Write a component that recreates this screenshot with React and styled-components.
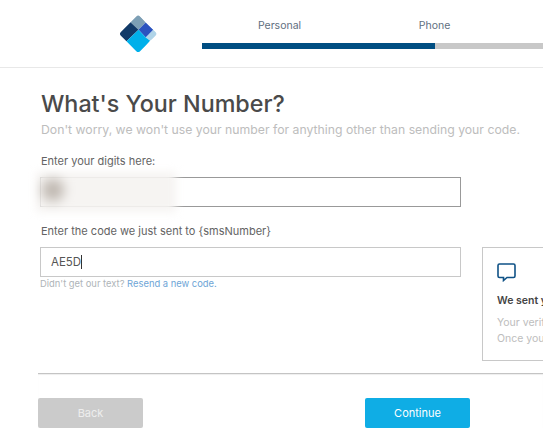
import React from "react";
import styled, { createGlobalStyle } from "styled-components";

const GlobalStyle = createGlobalStyle`
  html, body {
    margin: 0;
    padding: 0;
    background: #fff;
    overflow: hidden;
  }
  * {
    box-sizing: border-box;
  }
`;

const Logo = () => (
  <LogoSvg viewBox="50 40 130 125">
    <defs>
      <clipPath id="logoClip">
        <rect x="73" y="61" width="82" height="82" rx="8" transform="rotate(45 114 102)" />
      </clipPath>
    </defs>
    <g clipPath="url(#logoClip)">
      <polygon points="113,40 137,68 115,90 90,66" fill="#7d9fb5" />
      <polygon points="137,68 160,90 137,113 115,90" fill="#2b53bf" />
      <polygon points="160,90 180,103 150,123 137,113" fill="#b0d4e8" />
      <polygon points="90,66 115,90 78,125 50,100" fill="#123a68" />
      <polygon points="115,90 137,113 150,123 115,165 78,125" fill="#00b0ea" />
    </g>
  </LogoSvg>
);

const ChatIcon = () => (
  <ChatSvg viewBox="0 0 19 19" fill="none">
    <path
      d="M2.5 1h14a1.5 1.5 0 0 1 1.5 1.5v10.500a1.500 1.500 0 0 1-1.500 1.500H10l-3.500 3v-3h-4A1.500 1.500 0 0 1 1 13V2.500A1.500 1.500 0 0 1 2.500 1z"
      stroke="#0f5286"
      strokeWidth="1.6"
    />
  </ChatSvg>
);

export default function App() {
  return (
    <Page>
      <GlobalStyle />
      <Header>
        <Logo />
        <Steps>
          <Step>Personal</Step>
          <Step>Phone</Step>
          <Track>
            <TrackFill />
          </Track>
        </Steps>
      </Header>

      <Main>
        <Title>What's Your Number?</Title>
        <Subtitle>Don't worry, we won't use your number for anything other than sending your code.</Subtitle>

        <FormRow>
          <Form>
            <Field>
              <Label>Enter your digits here:</Label>
              <InputWrap>
                <Input $dark defaultValue="" />
                <Blur />
              </InputWrap>
            </Field>
            <Field>
              <Label>Enter the code we just sent to {"{smsNumber}"}</Label>
              <Input as="div">
                AE5D
                <Caret />
              </Input>
              <Help>
                Didn't get our text? <HelpLink>Resend a new code.</HelpLink>
              </Help>
            </Field>
          </Form>

          <Aside>
            <ChatIcon />
            <AsideTitle>We sent you a code</AsideTitle>
            <AsideText>Your verification code is on its way.</AsideText>
            <AsideText>Once you get it, enter it here.</AsideText>
          </Aside>
        </FormRow>
      </Main>

      <Footer>
        <Button>Back</Button>
        <Button $primary>Continue</Button>
      </Footer>
    </Page>
  );
}

const Page = styled.div`
  width: 543px;
  height: 445px;
  overflow: hidden;
  font-family: "Inter", "Liberation Sans", sans-serif;
  color: #4a4a4a;
`;

const Header = styled.header`
  display: flex;
  height: 68px;
  padding-left: 117px;
  border-bottom: 1px solid #e8e8e8;
`;

const LogoSvg = styled.svg`
  width: 43px;
  height: 42px;
  margin-top: 13px;
  margin-right: 42px;
  flex: none;
`;

const Steps = styled.div`
  display: grid;
  grid-template-columns: 155px 155px;
  grid-template-rows: 43px 6px;
  flex: none;
  width: 400px;
`;

const Step = styled.div`
  display: flex;
  justify-content: center;
  padding-top: 19px;
  font-size: 10.5px;
  line-height: 13px;
  color: #5f6f80;
`;

const Track = styled.div`
  grid-column: 1 / -1;
  width: 400px;
  height: 6px;
  background: #c8c8c8;
`;

const TrackFill = styled.div`
  width: 233px;
  height: 6px;
  background: #004e82;
`;

const Main = styled.main`
  height: 305px;
  padding: 22px 0 0 40px;
`;

const Title = styled.h1`
  margin: 0;
  padding-left: 1px;
  font-size: 23.3px;
  line-height: 28px;
  font-weight: 500;
  color: #4a4a4a;
  white-space: nowrap;
`;

const Subtitle = styled.p`
  margin: 5px 0 0;
  padding-left: 1px;
  font-size: 12.25px;
  line-height: 14px;
  color: #bdbdbd;
  white-space: nowrap;
`;

const FormRow = styled.div`
  display: flex;
  align-items: flex-start;
  gap: 21px;
  margin-top: 17px;
`;

const Form = styled.div`
  display: flex;
  flex-direction: column;
  gap: 17px;
  width: 421px;
  flex: none;
`;

const Field = styled.div`
  display: flex;
  flex-direction: column;
`;

const Label = styled.label`
  height: 23px;
  padding-left: 1px;
  font-size: 11px;
  line-height: 14px;
  color: #636363;
  white-space: nowrap;
`;

const InputWrap = styled.div`
  position: relative;
`;

const Input = styled.input`
  display: block;
  width: 100%;
  height: 30px;
  padding: 0 10px;
  border: 1px solid ${(p) => (p.$dark ? "#999" : "#c8c8c8")};
  border-radius: 0;
  outline: none;
  background: #fff;
  font-family: inherit;
  font-size: 11.5px;
  line-height: 28px;
  color: #555;
`;

const Caret = styled.span`
  display: inline-block;
  width: 1px;
  height: 14px;
  vertical-align: -3px;
  background: #333;
`;

const Blur = styled.div`
  position: absolute;
  left: -4px;
  top: -5px;
  width: 140px;
  height: 40px;
  background: radial-gradient(circle at 17px 18px, #b5aca4 0, #cbc5bf 7px, #f6f4f2 17px);
  filter: blur(4px);
`;

const Help = styled.div`
  margin-top: 1px;
  font-size: 9.4px;
  line-height: 11px;
  color: #aeb4b8;
  white-space: nowrap;
`;

const HelpLink = styled.span`
  color: #6ea5d6;
`;

const Aside = styled.aside`
  flex: none;
  width: 220px;
  height: 114px;
  margin-top: 93px;
  padding: 15px 14px;
  border: 1px solid #c8c8c8;
  white-space: nowrap;
`;

const ChatSvg = styled.svg`
  display: block;
  width: 19px;
  height: 19px;
`;

const AsideTitle = styled.div`
  margin: 12px 0 8px;
  font-size: 10.5px;
  line-height: 13px;
  font-weight: 600;
  color: #444;
`;

const AsideText = styled.div`
  font-size: 10.5px;
  line-height: 16px;
  color: #bdbdbd;
`;

const Footer = styled.footer`
  display: flex;
  gap: 222px;
  margin-left: 38px;
  padding-top: 24px;
  border-top: 1px solid #c4c4c4;
  box-shadow: inset 0 1px 1px #eee;
`;

const Button = styled.button`
  width: 105px;
  height: 30px;
  padding: 0;
  border: none;
  border-radius: 2px;
  background: ${(p) => (p.$primary ? "#0fade5" : "#cbcbcb")};
  color: ${(p) => (p.$primary ? "#fff" : "#eeeeee")};
  font-family: inherit;
  font-size: 11px;
`;
